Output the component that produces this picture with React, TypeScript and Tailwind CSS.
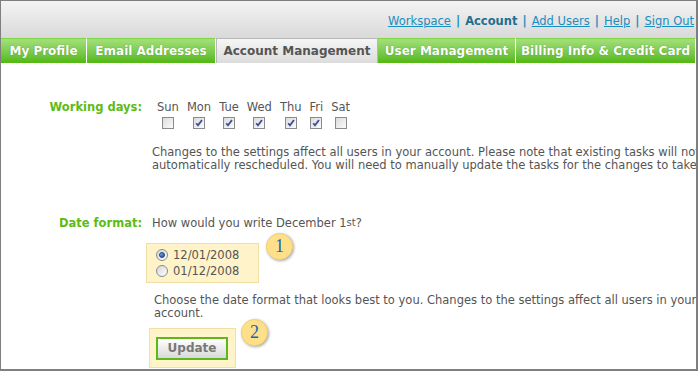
import React from "react";

const days = [
  { name: "Sun", on: false },
  { name: "Mon", on: true },
  { name: "Tue", on: true },
  { name: "Wed", on: true },
  { name: "Thu", on: true },
  { name: "Fri", on: true },
  { name: "Sat", on: false },
];

const tabs = [
  { name: "My Profile", w: "w-[86px]" },
  { name: "Email Addresses", w: "w-[129px]" },
  { name: "Account Management", w: "w-[162px]", active: true },
  { name: "User Management", w: "w-[138px]" },
  { name: "Billing Info & Credit Card", w: "flex-1" },
];

function Checkbox({ checked }: { checked: boolean }) {
  return (
    <span className="relative block w-[12px] h-[12px] border border-[#8a8a8a] bg-gradient-to-br from-[#dcdcdc] to-[#fbfbfb]">
      {checked && (
        <svg viewBox="0 0 10 10" className="absolute left-[0px] top-[0px] w-[10px] h-[10px]">
          <path d="M2.2 5.2 L4 7.4 L8 2" fill="none" stroke="#3b4e9c" strokeWidth="1.8" />
        </svg>
      )}
    </span>
  );
}

function Radio({ checked }: { checked: boolean }) {
  return (
    <span className="flex items-center justify-center w-[12px] h-[12px] rounded-full border border-[#8a8a8a] bg-gradient-to-br from-[#d6d6d6] to-[#ffffff]">
      {checked && <span className="block w-[6px] h-[6px] rounded-full bg-gradient-to-br from-[#7fb8e8] to-[#1c4f9c] border border-[#1b3f7a]" />}
    </span>
  );
}

function Badge({ n }: { n: string }) {
  return (
    <span
      className="flex items-center justify-center w-[27px] h-[27px] rounded-full bg-[#ffe08a] border border-[#f3cf6d] shadow-[1px_1px_3px_rgba(0,0,0,0.35)] text-[#1763b8] text-[18px]"
      style={{ fontFamily: '"Liberation Serif", serif' }}
    >
      {n}
    </span>
  );
}

export default function App() {
  return (
    <div
      className="w-[698px] h-[371px] overflow-hidden bg-white border-t border-l border-r-2 border-b-2 border-[#7f7f7f] text-[11.5px] leading-[13px] text-[#555]"
      style={{ fontFamily: '"DejaVu Sans", Verdana, sans-serif' }}
    >
      {/* header */}
      <div className="h-[37px] bg-gradient-to-b from-[#f4f4f4] to-[#d9d9d9] flex items-end justify-end pr-[2px] pb-[10px] text-[11.5px] leading-[14px] text-[#1a8ec0]">
        <a className="underline">Workspace</a>
        <span className="font-bold px-[5px]">|</span>
        <span className="font-bold text-[#1f6f90]">Account</span>
        <span className="font-bold px-[5px]">|</span>
        <a className="underline">Add Users</a>
        <span className="font-bold px-[5px]">|</span>
        <a className="underline">Help</a>
        <span className="font-bold px-[5px]">|</span>
        <a className="underline">Sign Out</a>
      </div>

      {/* tabs */}
      <div className="flex h-[25px]">
        {tabs.map((t) =>
          t.active ? (
            <div
              key={t.name}
              className={`${t.w} flex items-center justify-center border border-b-0 border-[#b8b8b8] bg-gradient-to-b from-[#f6f6f6] to-[#dcdcdc] font-bold text-[#555] text-[12px]`}
            >
              {t.name}
            </div>
          ) : (
            <div
              key={t.name}
              className={`${t.w} flex items-center justify-center border-r border-white bg-gradient-to-b from-[#a4e07a] to-[#52b80a] border-t border-t-[#7fd447] font-bold text-white text-[12px] [text-shadow:0_0_1px_rgba(40,90,0,0.6)]`}
            >
              {t.name}
            </div>
          )
        )}
      </div>

      {/* content */}
      <div className="pt-[38px]">
        <div className="flex">
          <div className="w-[141px] shrink-0 text-right font-bold text-[#5cbc14]">Working days:</div>
          <div className="pl-[10px]">
            <div className="flex ml-[1px]">
              {days.map((d) => (
                <div key={d.name} className="flex flex-col items-center px-[4px]">
                  <span>{d.name}</span>
                  <span className="mt-[3px]">
                    <Checkbox checked={d.on} />
                  </span>
                </div>
              ))}
            </div>
            <p className="mt-[17px] whitespace-nowrap">
              Changes to the settings affect all users in your account. Please note that existing tasks will not be
              <br />
              automatically rescheduled. You will need to manually update the tasks for the changes to take effect.
            </p>
          </div>
        </div>

        <div className="flex mt-[45px]">
          <div className="w-[141px] shrink-0 text-right font-bold text-[#5cbc14]">Date format:</div>
          <div className="pl-[10px]">
            <div>
              How would you write December 1<sup className="text-[10px] relative top-[-1px]">st</sup>?
            </div>
            <div className="relative mt-[13px] ml-[-6px] w-[113px] bg-[#fff3c9] border border-[#f1dfa6] pl-[9px] py-[3px]">
              <label className="flex items-center h-[16px] gap-[5px]">
                <Radio checked={true} />
                <span>12/01/2008</span>
              </label>
              <label className="flex items-center h-[16px] gap-[5px]">
                <Radio checked={false} />
                <span>01/12/2008</span>
              </label>
              <div className="absolute left-[119px] top-[-11px]">
                <Badge n="1" />
              </div>
            </div>
            <p className="mt-[11px] ml-[2px] whitespace-nowrap">
              Choose the date format that looks best to you. Changes to the settings affect all users in your
              <br />
              account.
            </p>
            <div className="relative mt-[8px] ml-[-3px] w-[87px] h-[40px] bg-[#fff3c9] border border-[#f1dfa6] pl-[6px] pt-[8px]">
              <button className="w-[72px] h-[23px] border-2 border-[#5db81c] bg-gradient-to-b from-[#ffffff] to-[#d9d9d9] font-bold text-[12px] text-[#777]">
                Update
              </button>
              <div className="absolute left-[91px] top-[-10px]">
                <Badge n="2" />
              </div>
            </div>
          </div>
        </div>
      </div>
    </div>
  );
}
